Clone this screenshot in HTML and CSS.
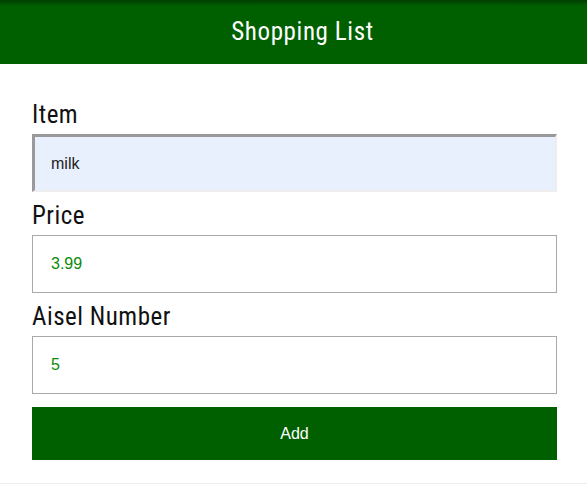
FILE: index.html
```html
<!DOCTYPE html>
<html>
<head>
<meta charset="utf-8">
<title>Shopping List</title>
<link rel="stylesheet" href="styles.css">
</head>
<body>
<header class="bar">
  <h1 class="title">Shopping List</h1>
</header>
<form class="form">
  <label class="label" for="item">Item</label>
  <input class="field field-auto" id="item" type="text" value="milk">
  <label class="label" for="price">Price</label>
  <input class="field field-green" id="price" type="text" value="3.99">
  <label class="label" for="aisle">Aisel Number</label>
  <input class="field field-green" id="aisle" type="text" value="5">
  <button class="btn" type="button">Add</button>
</form>
</body>
</html>
```

FILE: styles.css
```css
html, body {
  margin: 0;
  padding: 0;
  background: #ffffff;
}
body {
  font-family: "Roboto Condensed", "Arial Narrow", "Liberation Sans Narrow", "DejaVu Sans Condensed", sans-serif;
}
.bar {
  height: 64px;
  background: linear-gradient(#003d00 0px, #006000 6px, #006000 100%);
  display: flex;
  align-items: center;
  justify-content: center;
}
.title {
  margin: 0;
  padding-left: 18px;
  color: #ffffff;
  font-weight: normal;
  font-size: 25px;
  letter-spacing: 0.6px;
  line-height: 30px;
}
.form {
  display: flex;
  flex-direction: column;
  padding: 27px 30px 23px 32px;
  border-bottom: 1px solid #eeeeee;
}
.label {
  display: block;
  font-size: 25px;
  letter-spacing: 0.5px;
  line-height: 30px;
  padding-top: 9px;
  margin-bottom: 4px;
  color: #111111;
}
.field {
  box-sizing: border-box;
  height: 58px;
  width: 525px;
  margin: 0;
  padding: 0 0 0 18px;
  font-family: "Liberation Sans", Arial, sans-serif;
  font-size: 16px;
  border: 1px solid #a9a9a9;
  background: #ffffff;
  outline: none;
}
.field-auto {
  background: #e8f0fe;
  color: #222222;
  border-width: 3px 2px 2px 3px;
  border-style: solid;
  border-color: #9a9a9a #eeeeee #eeeeee #9a9a9a;
  padding-left: 16px;
}
.field-green {
  color: #0b8a0b;
}
.btn {
  margin-top: 13px;
  width: 525px;
  height: 53px;
  border: none;
  background: #006000;
  color: #ffffff;
  font-family: "Liberation Sans", Arial, sans-serif;
  font-size: 16px;
  padding: 0;
}
```
